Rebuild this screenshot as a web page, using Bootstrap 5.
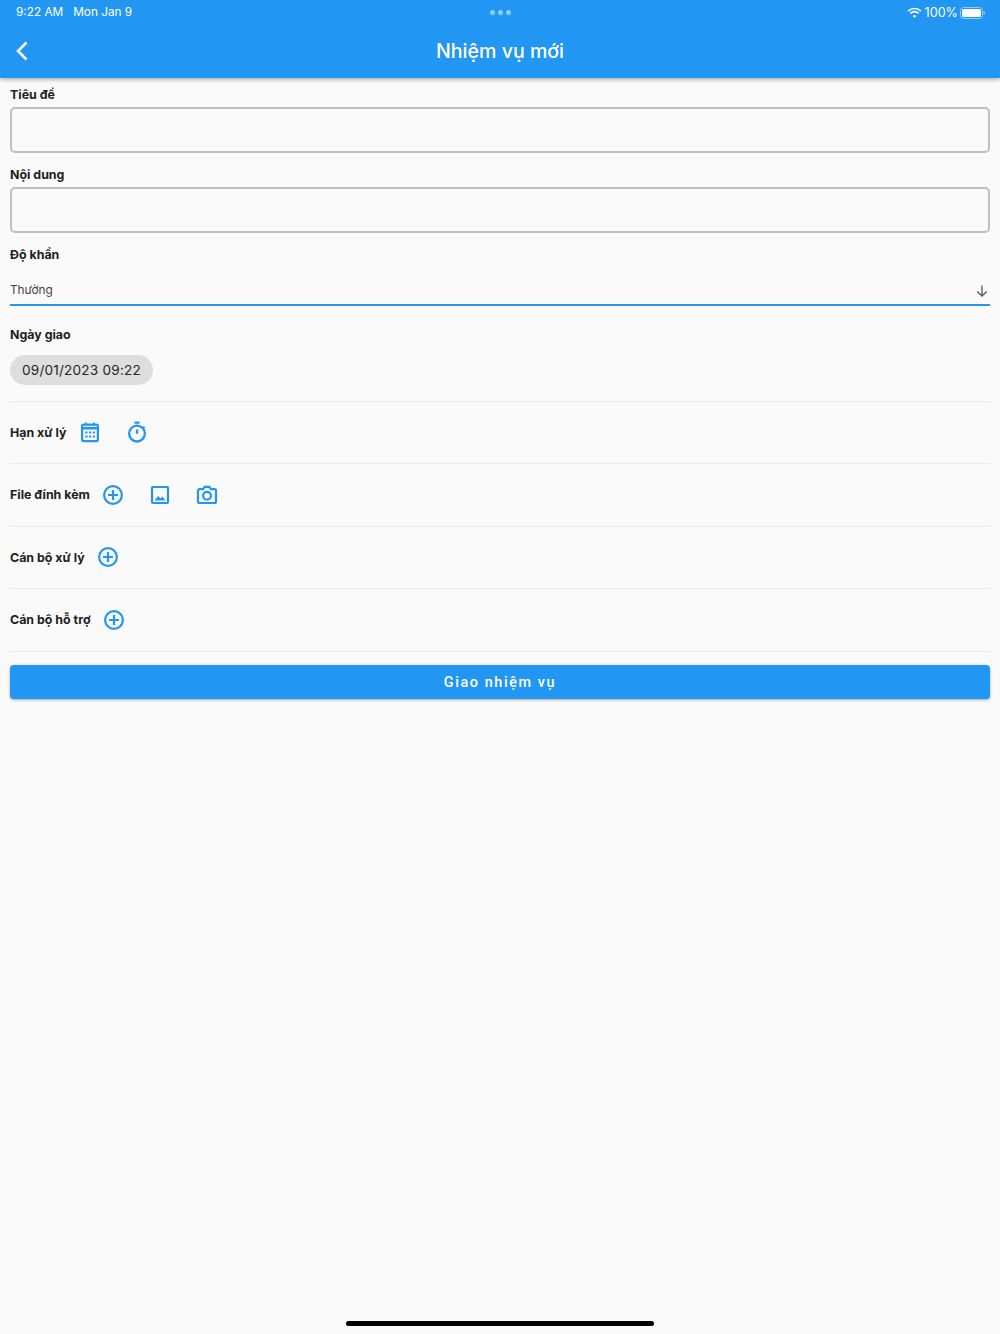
<!DOCTYPE html>
<html lang="vi">
<head>
<meta charset="utf-8">
<title>Nhiệm vụ mới</title>
<link href="https://cdn.jsdelivr.net/npm/bootstrap@5.3.0/dist/css/bootstrap.min.css" rel="stylesheet">
<style>
html,body{height:100%}
body{background:#fafafa;font-family:Inter,"Liberation Sans",sans-serif;color:#212121;width:1000px;height:1334px;overflow:hidden}
.app-head{background:#2196f3;height:78px;color:#fff;box-shadow:0 2px 4px rgba(0,0,0,.28);position:relative}
.status-line{height:24px;padding:2px 15px 0 16px}
.status-line span{font-family:Inter,sans-serif;font-weight:400;font-size:11.8px}
.status-line .batt-txt{font-size:12.6px;margin-left:3px;margin-right:2px}
.dots{gap:3px;position:absolute;left:490px;top:10px}
.dots i{display:block;width:5px;height:5px;border-radius:50%;background:#8fd2ff}
.title-line{height:54px;position:relative}
.title-line h1{font-size:19.6px;font-weight:500;margin:0;line-height:54px}
.back-btn{position:absolute;left:15px;top:16px;line-height:0}
.form-area{padding:8.5px 10px 0}
.fld-label{font-size:12.4px;font-weight:700;line-height:16px;margin:0;color:#212121}
.field-block{height:80px}
.fld-box{height:46px;margin-top:4.5px;background:transparent;border:2px solid #bfbfbf;border-radius:5px;box-shadow:none}
.sel-block{height:80px}
.sel-line{margin-top:11px;height:32px;padding-top:4px;border-bottom:2px solid #2196f3;font-size:11.8px;color:#424242;padding-right:1px}
.pick-block{height:75px;border-bottom:1px solid #eaeaea}
.date-pill{display:inline-block;margin-top:12px;height:30px;width:143px;text-align:center;line-height:30px;border-radius:15px;background:#dedede;font-size:13.6px;letter-spacing:.2px;color:#262626}
.act-row{height:62.5px;border-bottom:1px solid #eaeaea;gap:11.5px}
.act-row .fld-label{padding-top:1px}
.ico{width:24px;height:24px;display:block;flex:none}
.ico-gap{margin-left:11.5px}
.cta{display:block;width:100%;height:34px;margin-top:13.5px;padding:1px 0 0;background:#2196f3;border:0;border-radius:4px;color:#fff;font-size:14.4px;font-weight:500;letter-spacing:1.6px;font-family:Roboto,Inter,sans-serif;box-shadow:0 1px 3px rgba(0,0,0,.35)}
.home-bar{position:absolute;left:346px;top:1321px;width:308px;height:5px;border-radius:3px;background:#000}
</style>
</head>
<body class="position-relative">
<header class="app-head">
  <div class="status-line d-flex justify-content-between align-items-center">
    <span>9:22 AM&nbsp;&nbsp; Mon Jan 9</span>
    <span class="d-flex align-items-center">
      <svg width="15" height="11" viewBox="0 0 15 11" fill="none" stroke="#fff" stroke-width="1.6"><path d="M1 4.2a9.2 9.2 0 0 1 13 0"/><path d="M3.3 6.4a5.9 5.9 0 0 1 8.4 0"/><circle cx="7.5" cy="9.2" r="1.3" fill="#fff" stroke="none"/></svg>
      <span class="batt-txt">100%</span>
      <svg width="25" height="12" viewBox="0 0 25 12"><rect x=".5" y=".5" width="22" height="11" rx="3" fill="none" stroke="#90caf9"/><rect x="2" y="2" width="19" height="8" rx="1.6" fill="#fff"/><rect x="23.6" y="4" width="1.2" height="4" rx=".6" fill="#90caf9"/></svg>
    </span>
  </div>
  <div class="dots d-flex"><i></i><i></i><i></i></div>
  <div class="title-line text-center">
    <a class="back-btn" href="#" aria-label="Quay lại"><svg width="14" height="22" viewBox="0 0 14 22" fill="none" stroke="#fff" stroke-width="2.6"><path d="M11.5 2.5 3 11l8.5 8.5"/></svg></a>
    <h1>Nhiệm vụ mới</h1>
  </div>
</header>
<main class="form-area">
  <div class="field-block">
    <p class="fld-label">Tiêu đề</p>
    <input class="form-control fld-box" type="text" aria-label="Tiêu đề">
  </div>
  <div class="field-block">
    <p class="fld-label">Nội dung</p>
    <input class="form-control fld-box" type="text" aria-label="Nội dung">
  </div>
  <div class="sel-block">
    <p class="fld-label">Độ khẩn</p>
    <div class="sel-line d-flex justify-content-between align-items-center">
      <span>Thường</span>
      <svg width="14" height="14" viewBox="0 0 14 14" fill="none" stroke="#616161" stroke-width="1.4"><path d="M7 1.5v10.5M2.3 7.4 7 12l4.7-4.6"/></svg>
    </div>
  </div>
  <div class="pick-block">
    <p class="fld-label">Ngày giao</p>
    <span class="date-pill">09/01/2023 09:22</span>
  </div>
  <div class="act-row d-flex align-items-center">
    <p class="fld-label">Hạn xử lý</p>
    <svg class="ico" viewBox="0 0 24 24" fill="none" stroke="#2196f3" stroke-width="2.2"><rect x="4.1" y="4.6" width="15.8" height="16.6" rx="1.6"/><path d="M4 8.2h16" stroke-width="2.6"/><path d="M8 2.4v3.4M16 2.4v3.4" stroke-width="1.8"/><path stroke-width="2" stroke-dasharray="2.2 1.6" d="M7.3 12.6h9.6M7.3 16.6h9.6"/></svg>
    <svg class="ico ico-gap" viewBox="0 0 24 24" fill="none" stroke="#2196f3" stroke-width="2.3"><circle cx="12" cy="13.6" r="7.9"/><path d="M9.4 2.6h5.2M12 9.6v4.2" /><path d="M18 6.6l1.6 1.6" stroke-width="1.8"/></svg>
  </div>
  <div class="act-row d-flex align-items-center">
    <p class="fld-label">File đính kèm</p>
    <svg class="ico" viewBox="0 0 24 24" fill="none" stroke="#2196f3" stroke-width="2.2"><circle cx="12" cy="12" r="8.9"/><path d="M12 7v10M7 12h10"/></svg>
    <svg class="ico ico-gap" viewBox="0 0 24 24" fill="none" stroke="#2196f3" stroke-width="2.2"><rect x="4" y="4" width="16" height="16" rx="1"/><path d="M6.5 17.5l3.6-4.6 2.4 2.6 1.8-1.9 3.2 3.9z" fill="#2196f3" stroke="none"/></svg>
    <svg class="ico ico-gap" viewBox="0 0 24 24" fill="none" stroke="#2196f3" stroke-width="2.2"><path d="M4.5 6.2h3.7L9.6 3.8h4.8l1.4 2.4h3.7A1.5 1.5 0 0 1 21 7.7v10.8a1.5 1.5 0 0 1-1.5 1.5h-15A1.5 1.5 0 0 1 3 18.5V7.7a1.5 1.5 0 0 1 1.5-1.5z"/><circle cx="12" cy="12.8" r="3.9"/></svg>
  </div>
  <div class="act-row d-flex align-items-center">
    <p class="fld-label">Cán bộ xử lý</p>
    <svg class="ico" viewBox="0 0 24 24" fill="none" stroke="#2196f3" stroke-width="2.2"><circle cx="12" cy="12" r="8.9"/><path d="M12 7v10M7 12h10"/></svg>
  </div>
  <div class="act-row d-flex align-items-center">
    <p class="fld-label">Cán bộ hỗ trợ</p>
    <svg class="ico" viewBox="0 0 24 24" fill="none" stroke="#2196f3" stroke-width="2.2"><circle cx="12" cy="12" r="8.9"/><path d="M12 7v10M7 12h10"/></svg>
  </div>
  <button class="btn cta" type="button">Giao nhiệm vụ</button>
</main>
<div class="home-bar"></div>
<script src="https://cdn.jsdelivr.net/npm/bootstrap@5.3.0/dist/js/bootstrap.bundle.min.js"></script>
</body>
</html>
